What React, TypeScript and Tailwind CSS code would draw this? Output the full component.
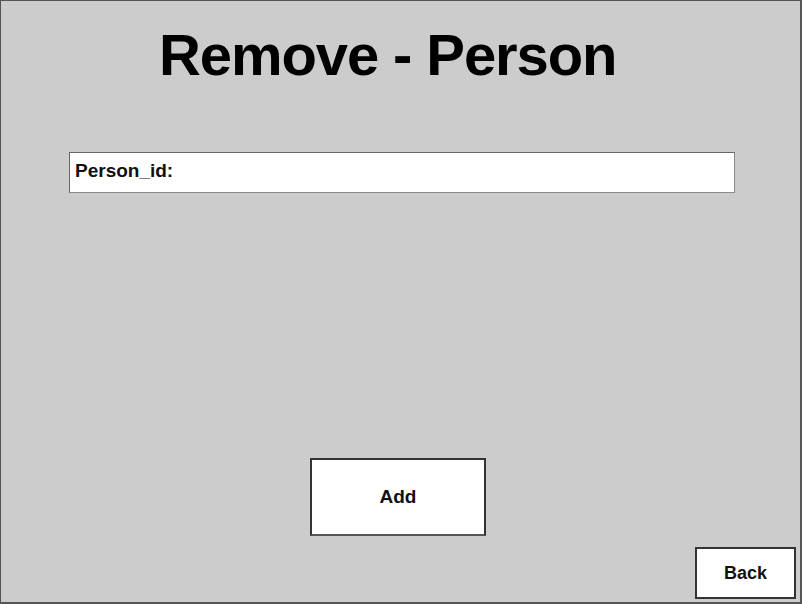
export default function App() {
  return (
    <div
      className="w-[802px] h-[604px] bg-[#cccccc] border-t border-l border-r-2 border-b-2 border-[#555555] flex flex-col box-border"
      style={{ fontFamily: '"Liberation Sans", Arial, sans-serif' }}
    >
      <h1 className="mt-[25px] ml-[158px] text-[58px] leading-none font-bold text-black tracking-[-1.1px]">
        Remove - Person
      </h1>

      <div className="mt-[68px] ml-[68px] w-[666px] h-[41px] bg-white border border-[#8a8a8a] border-t-[#666666] border-l-[#666666] flex items-center px-[5px] pb-[4px]">
        <span className="text-[19px] leading-none font-bold text-[#111111]">Person_id:</span>
      </div>

      <div className="mt-[265px] ml-[309px] w-[176px] h-[78px] bg-white border-2 border-[#333333] border-b-[#555555] flex items-center justify-center">
        <span className="text-[19px] font-bold text-[#111111]">Add</span>
      </div>

      <div className="mt-[11px] ml-[694px] w-[101px] h-[52px] bg-white border-2 border-[#333333] flex items-center justify-center">
        <span className="text-[18px] font-bold text-[#111111]">Back</span>
      </div>
    </div>
  )
}
